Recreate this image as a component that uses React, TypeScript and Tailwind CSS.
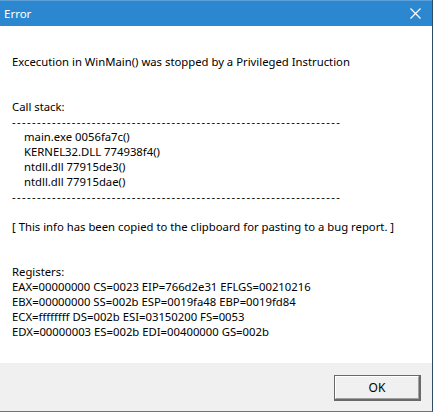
const stack = ["main.exe 0056fa7c()", "KERNEL32.DLL 774938f4()", "ntdll.dll 77915de3()", "ntdll.dll 77915dae()"];

const registers = [
    "EAX=00000000 CS=0023 EIP=766d2e31 EFLGS=00210216",
    "EBX=00000000 SS=002b ESP=0019fa48 EBP=0019fd84",
    "ECX=ffffffff DS=002b ESI=03150200 FS=0053",
    "EDX=00000003 ES=002b EDI=00400000 GS=002b",
];

const Dashes = () => (
    <div className="h-[15px] overflow-hidden tracking-[1.35px]">{"-".repeat(66)}</div>
);

const Blank = () => <div className="h-[15px]" />;

const App = () => {
    return (
        <div className="w-[433px] h-[414px] bg-white font-['Noto_Sans',sans-serif] text-[11.3px] text-black">
            <div className="flex flex-col h-[412px] border-r border-b border-r-[#2f4a66] border-b-[#3d80c4]">
                <div className="h-[26px] bg-[#2b88d0] border-t border-[#5d9fd8] flex items-center justify-between pl-[4px] pr-[11px] text-white">
                    <span className="leading-none text-[11.5px]">Error</span>
                    <svg width="11" height="11" viewBox="0 0 11 11" className="shrink-0">
                        <path d="M0.5 0.5 L10.5 10.5 M10.5 0.5 L0.5 10.5" stroke="white" strokeWidth="1.2" />
                    </svg>
                </div>

                <div className="flex-1 pl-[12px] pt-[28px] leading-[15px] whitespace-pre">
                    <div>Excecution in WinMain() was stopped by a Privileged Instruction</div>
                    <Blank />
                    <Blank />
                    <div>Call stack:</div>
                    <Dashes />
                    {stack.map((line) => (
                        <div key={line} className="pl-[12px]">{line}</div>
                    ))}
                    <Dashes />
                    <Blank />
                    <div>[ This info has been copied to the clipboard for pasting to a bug report. ]</div>
                    <Blank />
                    <Blank />
                    <div>Registers:</div>
                    {registers.map((line) => (
                        <div key={line}>{line}</div>
                    ))}
                </div>

                <div className="h-[48px] bg-[#f0f0f0] flex justify-end items-start pt-[12px] pr-[11px]">
                    <div className="w-[87px] h-[26px] border border-[#696969] border-b-2 border-r-2">
                        <div className="h-full border border-white border-b-[#a0a0a0] border-r-[#a0a0a0] bg-[#f0f0f0] flex items-center justify-center leading-none text-[12px]">
                            OK
                        </div>
                    </div>
                </div>
            </div>
        </div>
    );
};

export default App;
